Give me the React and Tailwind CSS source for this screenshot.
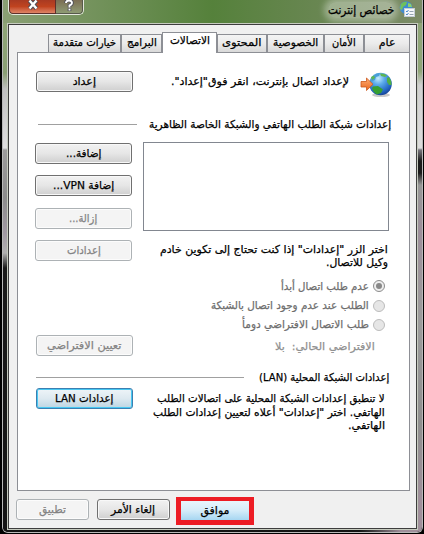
import { useLayoutEffect, useRef, useState } from "react";
import clsx from "clsx";

// One line of text, squeezed or stretched to the width of its box
const Line = ({ className, children }) => {
  const box = useRef(null);
  const text = useRef(null);
  const [scale, setScale] = useState(1);

  useLayoutEffect(() => {
    setScale(box.current.clientWidth / text.current.offsetWidth);
  }, [children]);

  return (
    <span ref={box} className={clsx("flex shrink-0 justify-start whitespace-pre", className)}>
      <span ref={text} className="shrink-0 origin-right" style={{ transform: `scaleX(${scale})` }}>
        {children}
      </span>
    </span>
  );
};

const Button = ({ variant = "normal", className, textClass, children }) => (
  <button
    className={clsx(
      "flex shrink-0 items-center justify-center rounded-[3px] border pb-px",
      variant === "normal" && "border-[#707070] bg-linear-to-b from-[#f2f2f2] from-0% via-[#e6e6e6] via-50% to-[#cfcfcf] shadow-[inset_0_0_0_1px_#f8f8f8]",
      variant === "disabled" && "border-[#adb2b5] bg-[#f4f4f4] text-[#838383] shadow-[inset_0_0_0_1px_#fcfcfc]",
      variant === "focused" && "border-[#3c7fb1] bg-linear-to-b from-[#eef4f8] via-[#dde9f0] to-[#bcd5e2] shadow-[inset_0_0_0_1px_#48c8f2]",
      className
    )}
  >
    <Line className={textClass}>{children}</Line>
  </button>
);

const Radio = ({ checked, className, textClass, children }) => (
  <div className={clsx("flex items-center text-[#6d6d6d]", className)}>
    <span
      className={clsx(
        "flex size-3 shrink-0 items-center justify-center rounded-full border",
        checked ? "border-[#8c8c8c] bg-[#eeeeee]" : "border-[#bcbcbc] bg-[#e6e6e6]"
      )}
    >
      {checked && <span className="size-1.5 rounded-full bg-[#888888]" />}
    </span>
    <Line className={clsx("ms-1", textClass)}>{children}</Line>
  </div>
);

const GlobeIcon = () => (
  <svg width="32" height="26" viewBox="0 0 32 26" className="mt-px shrink-0">
    <defs>
      <radialGradient id="sea" cx="0.4" cy="0.25" r="0.8">
        <stop offset="0" stopColor="#c5ecfc" />
        <stop offset="0.35" stopColor="#5aaaea" />
        <stop offset="0.75" stopColor="#2468c4" />
        <stop offset="1" stopColor="#123c8c" />
      </radialGradient>
      <linearGradient id="arrow" x1="0" y1="0" x2="0" y2="1">
        <stop offset="0" stopColor="#ffad73" />
        <stop offset="1" stopColor="#e8651c" />
      </linearGradient>
    </defs>
    <ellipse cx="21" cy="23" rx="9" ry="2" fill="#c9c9c9" />
    <circle cx="20.5" cy="12" r="11.3" fill="url(#sea)" />
    <path d="M13 4 Q17 0.5 20 1.2 L19 4 L16 5 L15 8 L11 10 Q11 7 13 4Z" fill="#4a9fd8" />
    <path d="M20 1.5 Q24 1 27 3.5 L25 5 L21 4Z" fill="#5db653" />
    <path d="M27 6 L29 5 Q32 9 31.5 13 L29 13 L27 10Z" fill="#4fae45" />
    <path d="M13 14.5 L18 14 L23 17.5 L21 21 L17 22.5 Q13 20 12 16Z" fill="#36a032" />
    <path d="M11 5 L14 3.5 L15 6 L12 8Z" fill="#5db653" />
    <path d="M1 9.5 H6.5 V6 L13 12.3 L6.5 18.5 V15 H1Z" fill="url(#arrow)" stroke="#c9571c" strokeWidth="0.8" />
  </svg>
);

const TitleIcon = () => (
  <svg width="16" height="17" viewBox="0 0 16 17" className="shrink-0">
    <circle cx="7" cy="6.5" r="6.3" fill="#3e8ad0" />
    <path d="M2 3 Q5 0 8 1 L7 4 L4 6 L3 9 L1 8Z" fill="#6fc05a" />
    <path d="M9 2 L12 3 L13 6 L9 6Z" fill="#8bd06d" />
    <rect x="5.5" y="7.5" width="10" height="8" fill="#f4f7fa" stroke="#c4ccd4" />
    <path d="M7 10 l1 1 l1.5 -2 M7 13 l1 1 l1.5 -2" stroke="#3c7fc4" fill="none" strokeWidth="0.9" />
    <path d="M10.5 10.5 h4 M10.5 13.5 h4" stroke="#8b9aa8" strokeWidth="0.9" />
  </svg>
);

const tabs = [
  { label: "عام", box: "w-[46px]", text: "w-[17px]" },
  { label: "الأمان", box: "w-[40px]", text: "w-[24px]" },
  { label: "الخصوصية", box: "w-[57px]", text: "w-[45px]" },
  { label: "المحتوى", box: "w-[50px]", text: "w-[39px]" },
  { label: "الاتصالات", box: "w-[55px]", text: "w-[40px]", active: true },
  { label: "البرامج", box: "w-[41px]", text: "w-[30px]" },
  { label: "خيارات متقدمة", box: "w-[73px]", text: "w-[63px]" },
];

const TitleBar = () => (
  <div className="flex h-[23px] items-start justify-between bg-linear-to-r from-[#8a9f74] from-0% via-[#55813b] via-50% to-[#7b8b66] ps-[7px] pe-[5px]">
    <div className="flex items-center gap-[5px] pt-px">
      <TitleIcon />
      <Line className="w-[66px] rounded-full bg-white/35 text-[12px] leading-4 shadow-[0_0_6px_4px_rgb(255_255_255/0.35)]">
        خصائص إنترنت
      </Line>
    </div>
    <div className="flex h-[15px] w-[76px] overflow-hidden rounded-b-[5px] border border-t-0 border-[#e3e7dc]" dir="ltr">
      <div className="flex w-[47px] items-start justify-center rounded-bl-[4px] border-r border-b border-l border-[#5e302b] bg-linear-to-b from-[#a83a22] via-[#c0431f] to-[#de8466]">
        <svg width="12" height="10" viewBox="0 0 12 10">
          <path d="M2.5 0.5 L9.5 8.5 M9.5 0.5 L2.5 8.5" stroke="#4d4d58" strokeWidth="4.4" />
          <path d="M2.5 0.5 L9.5 8.5 M9.5 0.5 L2.5 8.5" stroke="#ffffff" strokeWidth="2.4" />
        </svg>
      </div>
      <div className="flex flex-1 items-start justify-center rounded-br-[4px] border-r border-b border-[#57594b] bg-linear-to-b from-[#7b6e53] to-[#8e9c74]">
        <svg width="10" height="12" viewBox="0 0 10 12">
          <path d="M2 3 Q2 0.5 5 0.5 Q8 0.5 8 3 Q8 4.5 5.5 5.5 V7.5 M5.5 8.5 V11" stroke="#4d4d58" strokeWidth="3.6" fill="none" />
          <path d="M2 3 Q2 0.5 5 0.5 Q8 0.5 8 3 Q8 4.5 5.5 5.5 V7.5 M5.5 8.8 V10.6" stroke="#ffffff" strokeWidth="1.9" fill="none" />
        </svg>
      </div>
    </div>
  </div>
);

const Tabs = () => (
  <div className="flex h-[27px] items-end ps-[6px]">
    {tabs.map((tab) => (
      <div
        key={tab.label}
        className={clsx(
          "flex shrink-0 justify-center border border-b-0 border-[#8d8f95]",
          tab.box,
          tab.active ? "z-10 -mb-px h-[21px] bg-white" : "h-[18px] bg-linear-to-b from-[#f4f4f4] via-[#ebebeb] to-[#d9d9d9]"
        )}
      >
        <Line className={tab.text}>{tab.label}</Line>
      </div>
    ))}
  </div>
);

const DialUp = () => (
  <>
    <div className="flex h-[53px] items-start ps-[17px] pe-[18px] pt-[18px]">
      <GlobeIcon />
      <Line className="ms-[11px] mt-[3px] w-[178px]">لإعداد اتصال بإنترنت، انقر فوق"إعداد".</Line>
      <Button className="ms-auto h-[21px] w-[97px]" textClass="w-[23px]">إعداد</Button>
    </div>
    <div className="flex h-[36px] items-center ps-[18px] pe-[20px]">
      <Line className="w-[242px]">إعدادات شبكة الطلب الهاتفي والشبكة الخاصة الظاهرية</Line>
      <div className="ms-3 h-px flex-1 bg-[#a0a0a0]" />
    </div>
    <div className="flex h-[182px] justify-between ps-[20px] pe-[17px]">
      <div>
        <div className="h-[89px] w-[246px] border border-[#828790] bg-white" />
        <div className="ms-px mt-[12px] leading-[13px]">
          <Line className="w-[228px]">اختر الزر "إعدادات" إذا كنت تحتاج إلى تكوين خادم</Line>
          <Line className="w-[62px]">وكيل للاتصال.</Line>
        </div>
        <Radio checked className="ms-1 mt-[7px] h-5" textClass="w-[88px]">عدم طلب اتصال أبدأ</Radio>
        <Radio className="ms-1 h-[19px]" textClass="w-[158px]">الطلب عند عدم وجود اتصال بالشبكة</Radio>
        <Radio className="ms-1 h-[19px]" textClass="w-[127px]">طلب الاتصال الافتراضي دومأ</Radio>
      </div>
      <div className="flex flex-col pt-px">
        <Button className="h-[21px] w-[97px]" textClass="w-[35px]">إضافة...</Button>
        <Button className="mt-[11px] h-[21px] w-[97px]" textClass="w-[61px]">إضافة VPN...</Button>
        <Button variant="disabled" className="mt-[12px] h-[21px] w-[97px]" textClass="w-[28px]">إزالة...</Button>
        <Button variant="disabled" className="mt-[11px] h-[21px] w-[97px]" textClass="w-[34px]">إعدادات</Button>
      </div>
    </div>
    <div className="flex h-[42px] items-start ps-[34px] pe-[18px] pt-[11px] text-[#909090]">
      <Line className="mt-1 w-[100px]">الافتراضي الحالي:  بلا</Line>
      <Button variant="disabled" className="ms-auto h-[21px] w-[97px]" textClass="w-[74px]">تعيين الافتراضي</Button>
    </div>
  </>
);

const Lan = () => (
  <>
    <div className="flex h-[22px] items-center ps-[20px] pe-[18px]">
      <Line className="w-[130px]">إعدادات الشبكة المحلية (LAN)</Line>
      <div className="ms-[15px] h-px flex-1 bg-[#a0a0a0]" />
    </div>
    <div className="flex items-start ps-[24px] pe-[18px]">
      <div className="mt-[4px] leading-[13.5px]">
        <Line className="w-[228px]">لا تنطبق إعدادات الشبكة المحلية على اتصالات الطلب</Line>
        <Line className="w-[232px]">الهاتفي. اختر "إعدادات" أعلاه لتعيين إعدادات الطلب</Line>
        <Line className="w-[37px]">الهاتفي.</Line>
      </div>
      <Button variant="focused" className="ms-auto h-[21px] w-[97px]" textClass="w-[58px]">إعدادات LAN</Button>
    </div>
  </>
);

const Footer = () => (
  <div className="flex ps-[162px] pt-[6px]">
    <div className="flex h-[28px] w-[78px] border-[5px] border-t-4 border-[#ed1c24]">
      <div className="flex flex-1 items-center justify-center bg-linear-to-b from-[#e9f5fc] via-[#d5ecf9] to-[#a6d6f1] pb-px">
        <Line className="w-[29px]">موافق</Line>
      </div>
    </div>
    <Button className="ms-[6px] mt-[2px] h-[21px] w-[73px]" textClass="w-[44px]">إلغاء الأمر</Button>
    <Button variant="disabled" className="ms-2 mt-[2px] h-[21px] w-[73px]" textClass="w-[27px]">تطبيق</Button>
  </div>
);

export default function App() {
  return (
    <div
      dir="rtl"
      className="h-[534px] w-[424px] overflow-hidden bg-black pr-px pl-[2px] font-['DejaVu_Sans',sans-serif] text-[11px] leading-[15px] text-black [-webkit-text-stroke:0.25px]"
    >
      <div className="flex h-[533px] flex-col overflow-hidden rounded-b-[6px] border border-t-0 border-[#b9b9b9]">
        <TitleBar />
        <div className="flex h-[507px]">
          <div className="w-1 bg-[linear-gradient(to_bottom,#8fa577_0px,#8fa577_48px,#d0d0d0_62px,#dcdcdc_125px,#77757c_127px,#1c1c1c_138px,#1c1c1c_150px,#979797_162px,#9d8f9b_210px,#9c9c9c_300px,#8f8f8f_400px,#a08f9b_480px)]" />
          <div className="flex-1 border border-[#c6cbbf]">
            <div className="h-full border border-[#3d3d3d] bg-[#f0f0f0]">
              <Tabs />
              <div className="mr-[6px] ml-[8px] h-[439px] border border-[#8d8f95] bg-white">
                <DialUp />
                <Lan />
              </div>
              <Footer />
            </div>
          </div>
          <div className="w-1 bg-[linear-gradient(to_bottom,#8fa577_0px,#8a9f74_50px,#bfbfbf_66px,#e0e0e0_125px,#9c9c9c_127px,#8c8c8c_175px,#a199a3_210px,#b0b0b0_230px,#1a1a1a_245px,#141414_507px)]" />
        </div>
        <div className="flex-1 bg-linear-to-r from-[#141414] from-85% to-[#a08f9b] to-95%" />
      </div>
    </div>
  );
}
